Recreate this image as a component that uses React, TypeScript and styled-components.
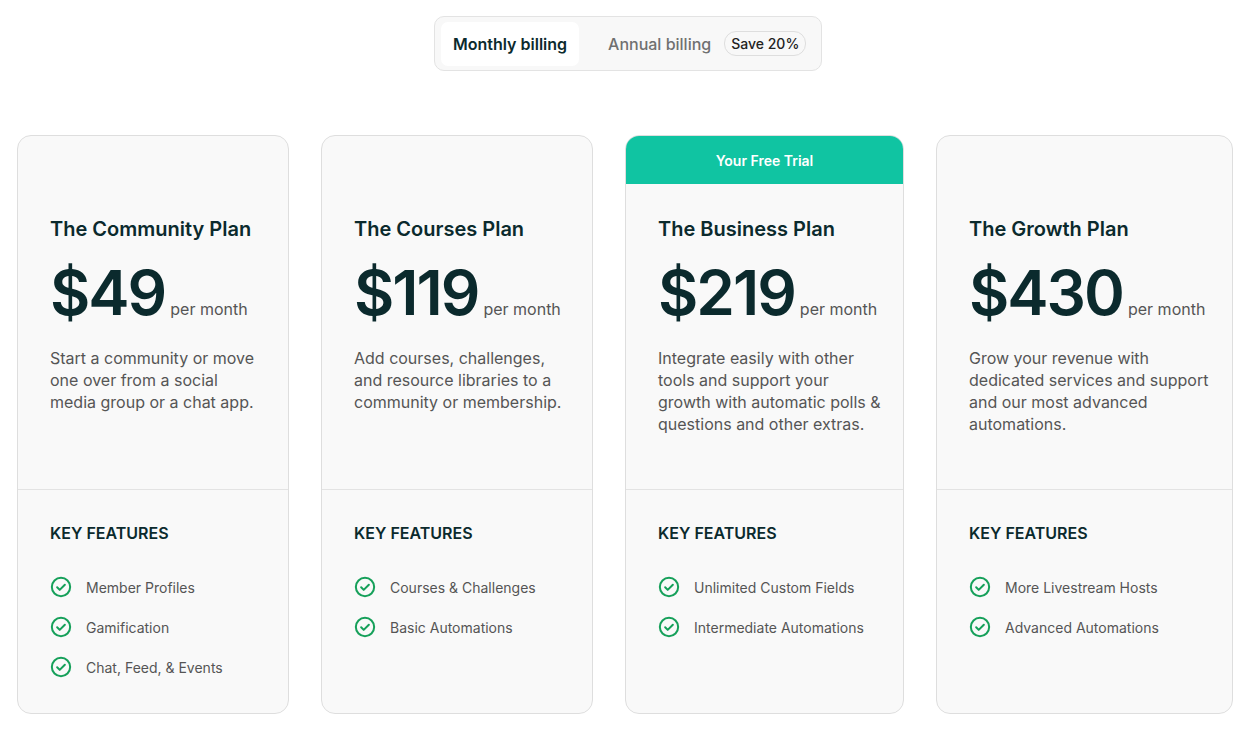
import React from 'react';
import styled, { createGlobalStyle } from 'styled-components';

const GlobalStyle = createGlobalStyle`
  body { margin: 0; background: #fff; font-family: Inter, "Noto Sans", sans-serif; color: #0b2a2d; }
`;

const Page = styled.div`
  display: flex;
  flex-direction: column;
  align-items: center;
  padding-top: 16px;
`;

const Toggle = styled.div`
  display: flex;
  align-items: center;
  width: 388px;
  height: 55px;
  box-sizing: border-box;
  padding: 6px;
  border: 1px solid #e3e3e3;
  border-radius: 10px;
  background: #f8f8f8;
`;

const Tab = styled.div<{ $active?: boolean }>`
  height: 44px;
  display: flex;
  align-items: center;
  padding: 0 12px;
  border-radius: 7px;
  font-size: 16px;
  font-weight: ${p => (p.$active ? 600 : 500)};
  color: ${p => (p.$active ? '#0b2a2d' : '#707070')};
  background: ${p => (p.$active ? '#fff' : 'transparent')};
  margin-right: ${p => (p.$active ? '17px' : '0')};
`;

const Save = styled.span`
  margin-left: 1px;
  padding: 3px 6px;
  border: 1px solid #dedede;
  border-radius: 12px;
  font-size: 14px;
  font-weight: 500;
  color: #222;
`;

const Grid = styled.div`
  display: grid;
  grid-template-columns: 272px 272px 279px 297px;
  column-gap: 32px;
  margin-top: 64px;
  align-self: flex-start;
  margin-left: 17px;
`;

const Card = styled.div`
  height: 579px;
  box-sizing: border-box;
  border: 1px solid #dedede;
  border-radius: 14px;
  background: #f9f9f9;
  overflow: hidden;
  display: flex;
  flex-direction: column;
`;

const Badge = styled.div<{ $show: boolean }>`
  height: 48px;
  flex: none;
  display: flex;
  align-items: center;
  justify-content: center;
  background: ${p => (p.$show ? '#10c4a2' : 'transparent')};
  color: #fff;
  font-size: 14px;
  font-weight: 600;
`;

const Top = styled.div`
  height: 306px;
  flex: none;
  box-sizing: border-box;
  padding: 33px 20px 0 32px;
  border-bottom: 1px solid #e3e3e3;
`;

const PlanName = styled.div`
  font-size: 20px;
  font-weight: 600;
  line-height: 24px;
`;

const PriceRow = styled.div`
  display: flex;
  align-items: baseline;
  margin-top: 20px;
  height: 64px;
`;

const Amount = styled.span`
  font-size: 62px;
  font-weight: 600;
  letter-spacing: -2px;
  line-height: 64px;
`;

const Per = styled.span`
  margin-left: 5px;
  font-size: 16px;
  color: #555;
`;

const Desc = styled.p`
  margin: 22px 0 0;
  font-size: 16px;
  line-height: 22px;
  color: #555;
`;

const Bottom = styled.div`
  padding: 33px 20px 0 32px;
`;

const FeatTitle = styled.div`
  font-size: 16px;
  font-weight: 600;
  margin-bottom: 24px;
`;

const Feature = styled.div`
  display: flex;
  align-items: center;
  gap: 14px;
  height: 40px;
  font-size: 14px;
  color: #555;
`;

const Check = () => (
  <svg width="22" height="22" viewBox="0 0 24 24" fill="none" stroke="#16a05a" strokeWidth="2.2" strokeLinecap="round" strokeLinejoin="round">
    <circle cx="12" cy="12" r="10" />
    <path d="M7.8 12.3l2.8 2.8 5.6-5.6" />
  </svg>
);

const plans = [
  { name: 'The Community Plan', price: '$49', desc: 'Start a community or move one over from a social media group or a chat app.', features: ['Member Profiles', 'Gamification', 'Chat, Feed, & Events'] },
  { name: 'The Courses Plan', price: '$119', desc: 'Add courses, challenges, and resource libraries to a community or membership.', features: ['Courses & Challenges', 'Basic Automations'] },
  { name: 'The Business Plan', price: '$219', desc: 'Integrate easily with other tools and support your growth with automatic polls & questions and other extras.', features: ['Unlimited Custom Fields', 'Intermediate Automations'], trial: true },
  { name: 'The Growth Plan', price: '$430', desc: 'Grow your revenue with dedicated services and support and our most advanced automations.', features: ['More Livestream Hosts', 'Advanced Automations'] },
];

export default function App() {
  return (
    <Page>
      <GlobalStyle />
      <Toggle>
        <Tab $active>Monthly billing</Tab>
        <Tab>Annual billing</Tab>
        <Save>Save 20%</Save>
      </Toggle>
      <Grid>
        {plans.map(p => (
          <Card key={p.name}>
            <Badge $show={!!p.trial}>{p.trial ? 'Your Free Trial' : ''}</Badge>
            <Top>
              <PlanName>{p.name}</PlanName>
              <PriceRow>
                <Amount>{p.price}</Amount>
                <Per>per month</Per>
              </PriceRow>
              <Desc>{p.desc}</Desc>
            </Top>
            <Bottom>
              <FeatTitle>KEY FEATURES</FeatTitle>
              {p.features.map(f => (
                <Feature key={f}><Check />{f}</Feature>
              ))}
            </Bottom>
          </Card>
        ))}
      </Grid>
    </Page>
  );
}
